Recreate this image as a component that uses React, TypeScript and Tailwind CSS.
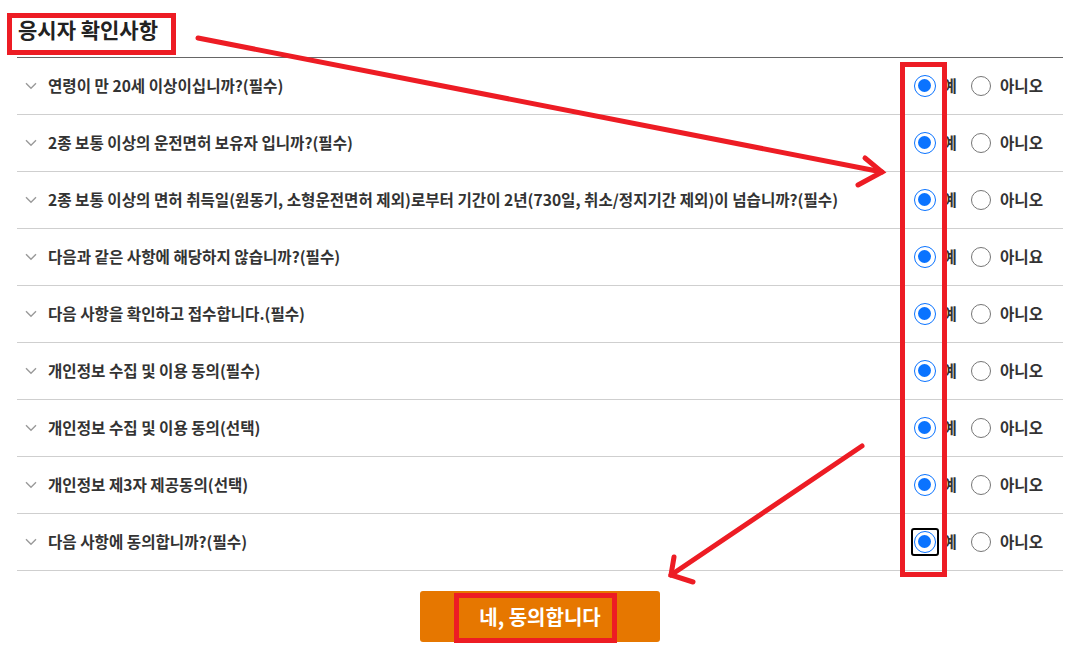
import React from 'react';

interface Question {
  id: number;
  label: string;
  noLabel: string;
}

const questions: Question[] = [
  { id: 1, label: '연령이 만 20세 이상이십니까?(필수)', noLabel: '아니오' },
  { id: 2, label: '2종 보통 이상의 운전면허 보유자 입니까?(필수)', noLabel: '아니오' },
  {
    id: 3,
    label: '2종 보통 이상의 면허 취득일(원동기, 소형운전면허 제외)로부터 기간이 2년(730일, 취소/정지기간 제외)이 넘습니까?(필수)',
    noLabel: '아니오',
  },
  { id: 4, label: '다음과 같은 사항에 해당하지 않습니까?(필수)', noLabel: '아니요' },
  { id: 5, label: '다음 사항을 확인하고 접수합니다.(필수)', noLabel: '아니오' },
  { id: 6, label: '개인정보 수집 및 이용 동의(필수)', noLabel: '아니오' },
  { id: 7, label: '개인정보 수집 및 이용 동의(선택)', noLabel: '아니오' },
  { id: 8, label: '개인정보 제3자 제공동의(선택)', noLabel: '아니오' },
  { id: 9, label: '다음 사항에 동의합니까?(필수)', noLabel: '아니오' },
];

const Chevron = () => (
  <svg width="12" height="8" viewBox="0 0 12 8" className="text-[#9a9a9a]">
    <path d="M1 1.2 L6 6.2 L11 1.2" fill="none" stroke="currentColor" strokeWidth="1.4" />
  </svg>
);

const CheckedRadio = ({ focused }: { focused?: boolean }) => (
  <span className="relative flex items-center justify-center w-[22px] h-[22px] rounded-full border-[1.5px] border-[#0a73ff] bg-white">
    <span className="w-[13px] h-[13px] rounded-full bg-[#0a73ff]" />
    {focused && (
      <span className="absolute -left-[4px] -top-[4px] w-[28px] h-[28px] rounded-[3px] border-2 border-black" />
    )}
  </span>
);

const EmptyRadio = () => <span className="block w-[20px] h-[20px] rounded-full border border-[#767676] bg-white" />;

const QuestionRow = ({ q, last }: { q: Question; last: boolean }) => (
  <div className="flex items-center h-[57px] border-b border-[#cfcfcf]">
    <div className="w-[31px] pl-[8px] flex items-center">
      <Chevron />
    </div>
    <span className="text-[15.6px] font-bold text-[#333]">{q.label}</span>
    <div className="ml-auto flex items-center pr-[20px]">
      <CheckedRadio focused={last} />
      <span className="ml-[7px] text-[15.6px] font-bold text-[#333]">예</span>
      <span className="ml-[14px]">
        <EmptyRadio />
      </span>
      <span className="ml-[9px] text-[15.6px] font-bold text-[#333]">{q.noLabel}</span>
    </div>
  </div>
);

export default function App() {
  return (
    <div className="relative w-[1086px] h-[671px] bg-white overflow-hidden font-['Noto_Sans_CJK_KR','Noto_Sans',sans-serif]">
      <div className="pl-[17px] pr-[23px]">
        <h2 className="h-[58px] flex items-center pl-[1px] pt-[3px] text-[21px] font-bold text-[#222] border-b border-[#666]">
          응시자 확인사항
        </h2>
        {questions.map((q, i) => (
          <QuestionRow key={q.id} q={q} last={i === questions.length - 1} />
        ))}
        <div className="flex justify-center pt-[20px]">
          <button className="w-[240px] h-[51px] rounded-[3px] bg-[#e67700] text-white text-[20px] font-bold">
            네, 동의합니다
          </button>
        </div>
      </div>

      {/* red annotation marks */}
      <div className="absolute left-[7px] top-[13px] w-[169px] h-[42px] border-[5px] border-[#ed1c24]" />
      <div className="absolute left-[900px] top-[62px] w-[47px] h-[515px] border-[5px] border-[#ed1c24]" />
      <div className="absolute left-[454px] top-[593px] w-[163px] h-[50px] border-[5px] border-[#ed1c24]" />
      <svg className="absolute left-0 top-0 pointer-events-none" width="1086" height="671">
        <g stroke="#ed1c24" strokeWidth="5" strokeLinecap="round" fill="none">
          <path d="M198 38 L882 172" />
          <path d="M865 158 L882 172 L858 185" />
          <path d="M862 446 L671 575" />
          <path d="M674 557 L671 575 L693 582" />
        </g>
      </svg>
    </div>
  );
}
